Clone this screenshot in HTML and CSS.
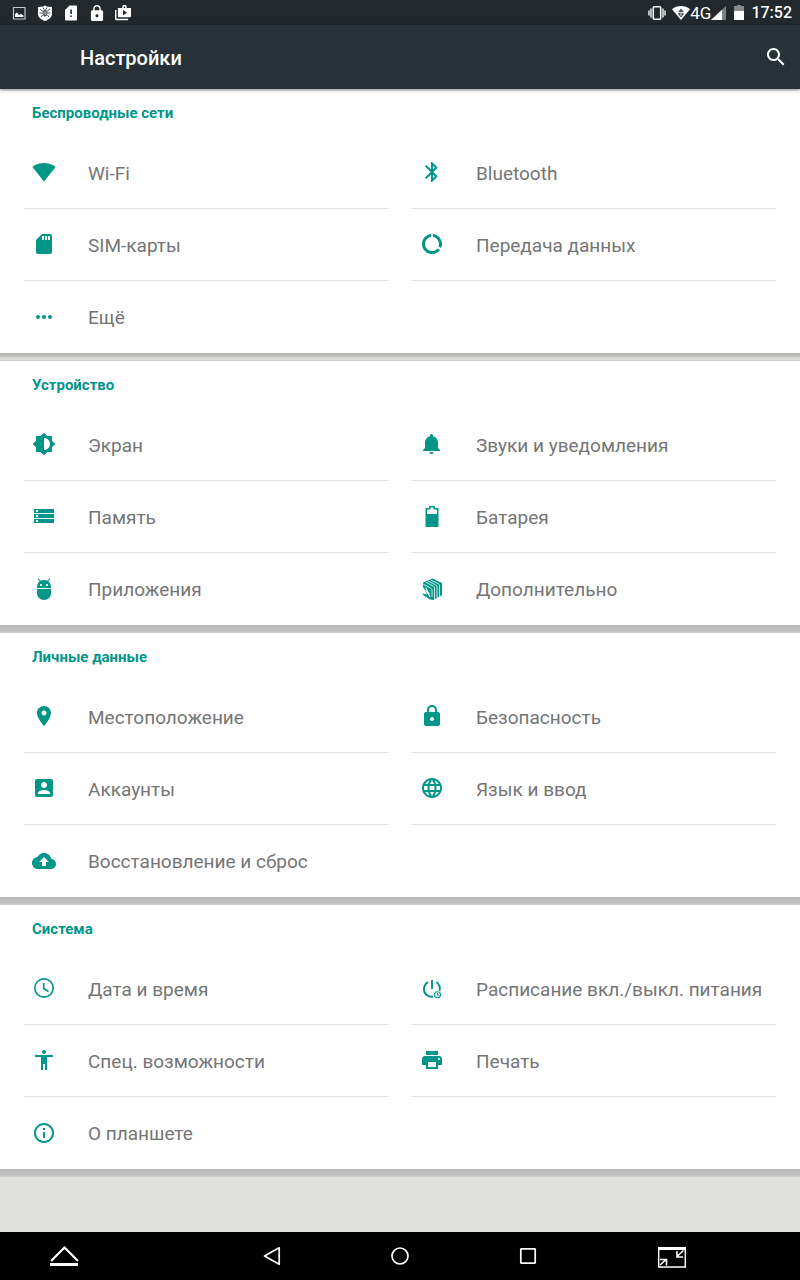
FILE: index.html
```html
<!DOCTYPE html>
<html lang="ru">
<head>
    <meta charset="utf-8">
    <meta name="viewport" content="width=device-width, initial-scale=1">
    <title>Настройки</title>
    <link rel="stylesheet" href="styles.css">
</head>
<body>
    <div class="status-bar">
        <div class="status-left">
            <svg class="status-icon" viewBox="0 0 16 16"><path fill="none" stroke="#c4c8ca" stroke-width="1.200" d="M2.500 2.500h11.500v11.500h-11.500z"/><path fill="#fff" d="M4 12V9l2-1.500 2 2.500 2-1 2.500 1.500V12z"/></svg>
            <svg class="status-icon" viewBox="0 0 16 16"><path d="M8 .3l1.500 1.200L15 2v7c0 3-3 5.500-7 7-4-1.500-7-4-7-7V2l5.500-.5z"/><path fill="none" stroke="#3c4448" stroke-width=".9" d="M3 4l3 2.500M13 4l-3 2.500M2.500 8H6m7.500 0H10M4 12l2-2.500m6 2.500l-2-2.500M6 2.500l1 2m3-2l-1 2"/><ellipse cx="8" cy="8" rx="2.200" ry="3.500" fill="#4a5155"/><path stroke="#fff" stroke-width=".7" d="M6.500 7h3M6.500 9h3"/></svg>
            <svg class="status-icon" viewBox="0 0 16 16"><path fill-rule="evenodd" d="M6.500.5H13a1 1 0 0 1 1 1v13a1 1 0 0 1-1 1H3a1 1 0 0 1-1-1V5zM7.300 4.500V9h1.600V4.500zm0 6v1.600h1.600v-1.600z"/></svg>
            <svg class="status-icon" viewBox="4 1 16 21"><path d="M18 8h-1V6c0-2.760-2.240-5-5-5S7 3.240 7 6v2H6c-1.100 0-2 .9-2 2v10c0 1.100.9 2 2 2h12c1.100 0 2-.9 2-2V10c0-1.100-.9-2-2-2zm-6 9c-1.100 0-2-.9-2-2s.9-2 2-2 2 .9 2 2-.9 2-2 2zm3.100-9H8.900V6c0-1.710 1.390-3.100 3.100-3.100s3.100 1.390 3.100 3.100z"/></svg>
            <svg class="status-icon" viewBox="1 1 22 22"><path d="M3 8H1v12c0 1.100.9 2 2 2h16v-2H3zM17 5V3c0-1.100-.9-2-2-2h-2c-1.100 0-2 .9-2 2v2H5v11c0 1.100.9 2 2 2h14c1.100 0 2-.9 2-2V5zm-4-2h2v2h-2zm-1 12V8l5.500 3.500z"/></svg>
        </div>
        <div class="status-right">
            <svg class="status-vibrate" viewBox="0 0 18 14"><path fill="#b5babc" d="M0 4.500h2v5H0zM2 2.500h2v9H2zM14 2.500h2v9h-2zM16 4.500h2v5h-2z"/><path fill="none" stroke="#fff" stroke-width="1.500" d="M6 .8h6a1 1 0 0 1 .7.7v11a1 1 0 0 1-.7.7H6a1 1 0 0 1-.7-.7v-11A1 1 0 0 1 6 .8z"/></svg>
            <svg class="status-wifi" viewBox="0 0 18 14"><path d="M0 3.200C5 -1 13-1 18 3.200L9 14z"/><path fill="#4a5155" d="M9 2.500l2.500 3v3L9 11.500 6.500 8.500v-3z"/><path fill="none" stroke="#fff" stroke-width=".8" d="M6 6.500h6M9 7v3"/></svg>
            <span class="network">4G</span>
            <svg class="status-signal" viewBox="0 0 15 14"><path fill="#7b8183" d="M15 0v14H0z"/><path d="M11 3.700V14H0z"/></svg>
            <svg class="status-battery" viewBox="0 0 10 15"><path fill="#85898b" d="M3 0h4v1h3v6H0V1h3z"/><path d="M0 6h10v9H0z"/></svg>
            <span class="clock">17:52</span>
        </div>
    </div>

    <header class="toolbar">
        <h1>Настройки</h1>
        <button class="search-button" type="button" aria-label="Поиск">
            <svg viewBox="0 0 24 24"><path d="M15.500 14h-.79l-.28-.27C15.410 12.590 16 11.110 16 9.500 16 5.910 13.090 3 9.500 3S3 5.910 3 9.500 5.910 16 9.500 16c1.610 0 3.090-.59 4.230-1.570l.27.28v.79l5 4.990L20.490 19zm-6 0C7.010 14 5 11.990 5 9.500S7.010 5 9.500 5 14 7.010 14 9.500 11.990 14 9.500 14z"/></svg>
        </button>
    </header>

    <main class="settings">
        <section class="card">
            <h2>Беспроводные сети</h2>
            <div class="grid">
                <a class="item" href="#">
                    <svg viewBox="0 0 24 24"><path d="M12 21.500L23.640 7c-.45-.34-4.930-4-11.640-4C5.280 3 .81 6.660.36 7z"/></svg>
                    <span>Wi-Fi</span>
                </a>
                <a class="item" href="#">
                    <svg viewBox="0 0 24 24"><path d="M17.710 7.710L12 2h-1v7.590L6.410 5 5 6.410 10.590 12 5 17.590 6.410 19 11 14.410V22h1l5.710-5.710-4.300-4.290zM13 5.830l1.880 1.880L13 9.590zm1.880 10.460L13 18.170v-3.760z"/></svg>
                    <span>Bluetooth</span>
                </a>
                <a class="item" href="#">
                    <svg viewBox="0 0 24 24"><path d="M18 2h-8L4.020 8 4 20c0 1.100.9 2 2 2h12c1.100 0 2-.9 2-2V4c0-1.100-.9-2-2-2zm-6 6h-2V4h2zm3 0h-2V4h2zm3 0h-2V4h2z"/></svg>
                    <span>SIM-карты</span>
                </a>
                <a class="item" href="#">
                    <svg viewBox="0 0 24 24"><path d="M13 2.050v3.030c3.390.49 6 3.390 6 6.920 0 .9-.18 1.750-.48 2.540l2.600 1.530c.56-1.240.88-2.620.88-4.070 0-5.180-3.950-9.450-9-9.950zM12 19c-3.870 0-7-3.130-7-7 0-3.530 2.610-6.430 6-6.920V2.050c-5.060.5-9 4.760-9 9.950 0 5.520 4.470 10 9.990 10 3.310 0 6.240-1.610 8.060-4.090l-2.600-1.530C16.170 17.980 14.210 19 12 19z"/></svg>
                    <span>Передача данных</span>
                </a>
                <a class="item item-last" href="#">
                    <svg viewBox="0 0 24 24"><path d="M6 10c-1.100 0-2 .9-2 2s.9 2 2 2 2-.9 2-2-.9-2-2-2zm12 0c-1.100 0-2 .9-2 2s.9 2 2 2 2-.9 2-2-.9-2-2-2zm-6 0c-1.100 0-2 .9-2 2s.9 2 2 2 2-.9 2-2-.9-2-2-2z"/></svg>
                    <span>Ещё</span>
                </a>
            </div>
        </section>
        <div class="divider divider-light"></div>

        <section class="card">
            <h2>Устройство</h2>
            <div class="grid">
                <a class="item" href="#">
                    <svg viewBox="0 0 24 24"><path d="M20 15.310L23.310 12 20 8.690V4h-4.690L12 .69 8.690 4H4v4.690L.69 12 4 15.310V20h4.690L12 23.310 15.310 20H20zM12 18V6c3.310 0 6 2.690 6 6s-2.690 6-6 6z"/></svg>
                    <span>Экран</span>
                </a>
                <a class="item" href="#">
                    <svg viewBox="0 0 24 24"><path d="M11.500 22c1.100 0 2-.9 2-2h-4c0 1.100.9 2 2 2zm6.500-6v-5.500c0-3.070-2.130-5.640-5-6.320V3.500c0-.83-.67-1.500-1.500-1.500S10 2.670 10 3.500v.68c-2.870.68-5 3.250-5 6.320V16l-2 2v1h17v-1z"/></svg>
                    <span>Звуки и уведомления</span>
                </a>
                <a class="item" href="#">
                    <svg viewBox="0 0 24 24"><path d="M2 19h20v-4H2zm2-3h2v2H4zM2 5v4h20V5zm4 3H4V6h2zm-4 6h20v-4H2zm2-3h2v2H4z"/></svg>
                    <span>Память</span>
                </a>
                <a class="item" href="#">
                    <svg viewBox="0 0 24 24"><path fill-rule="evenodd" d="M9 2h6v2h3.500v19h-13V4H9zm1.500 1.500v2H7V10h10V5.500h-3.500v-2z"/></svg>
                    <span>Батарея</span>
                </a>
                <a class="item item-last" href="#">
                    <svg viewBox="0 0 24 24"><path fill-rule="evenodd" d="M5 16c0 3.900 3.100 7 7 7s7-3.100 7-7v-4H5zM16.120 4.370l2.100-2.100-.82-.83-2.300 2.310C14.160 3.280 13.120 3 12 3s-2.160.28-3.090.75L6.600 1.440l-.82.83 2.100 2.100C6.140 5.640 5 7.680 5 10v1h14v-1c0-2.320-1.140-4.360-2.880-5.630zM9 9c-.55 0-1-.45-1-1s.45-1 1-1 1 .45 1 1-.45 1-1 1zm6 0c-.55 0-1-.45-1-1s.45-1 1-1 1 .45 1 1-.45 1-1 1z"/></svg>
                    <span>Приложения</span>
                </a>
                <a class="item item-last" href="#">
                    <svg viewBox="0 0 24 24"><path d="M3 5.500L12.500 1.500 22 6v12L13.500 23 10 22.500 3 18v-1.500l4 1L3 10z"/><path fill="none" stroke="#fff" stroke-width=".8" d="M5.500 5l7.500 4c1 .5 1.500 1 1.500 2v12M8 4l7.500 3.800c1 .5 1.500 1 1.500 2V21.500M10.500 3l7.500 3.500c1 .5 1.500 1 1.500 2V20M3 7l7.500 4c1 .5 1.500 1.500 1.500 2.500V20"/><path fill="none" stroke="#fff" stroke-width="1.100" d="M3 12.500l4 2.500 3 5M5.500 10.500l4 7"/></svg>
                    <span>Дополнительно</span>
                </a>
            </div>
        </section>
        <div class="divider"></div>

        <section class="card">
            <h2>Личные данные</h2>
            <div class="grid">
                <a class="item" href="#">
                    <svg viewBox="0 0 24 24"><path d="M12 2C8.130 2 5 5.130 5 9c0 5.250 7 13 7 13s7-7.750 7-13c0-3.870-3.130-7-7-7zm0 9.500c-1.380 0-2.500-1.120-2.500-2.500s1.120-2.500 2.500-2.500 2.500 1.120 2.500 2.500-1.120 2.500-2.500 2.500z"/></svg>
                    <span>Местоположение</span>
                </a>
                <a class="item" href="#">
                    <svg viewBox="0 0 24 24"><path d="M18 8h-1V6c0-2.760-2.240-5-5-5S7 3.240 7 6v2H6c-1.100 0-2 .9-2 2v10c0 1.100.9 2 2 2h12c1.100 0 2-.9 2-2V10c0-1.100-.9-2-2-2zm-6 9c-1.100 0-2-.9-2-2s.9-2 2-2 2 .9 2 2-.9 2-2 2zm3.100-9H8.900V6c0-1.710 1.390-3.100 3.100-3.100s3.100 1.390 3.100 3.100z"/></svg>
                    <span>Безопасность</span>
                </a>
                <a class="item" href="#">
                    <svg viewBox="0 0 24 24"><path d="M3 5v14c0 1.100.89 2 2 2h14c1.100 0 2-.9 2-2V5c0-1.100-.9-2-2-2H5c-1.110 0-2 .9-2 2zm12 4c0 1.660-1.340 3-3 3s-3-1.340-3-3 1.340-3 3-3 3 1.340 3 3zm-9 8c0-2 4-3.100 6-3.100s6 1.100 6 3.100v1H6z"/></svg>
                    <span>Аккаунты</span>
                </a>
                <a class="item" href="#">
                    <svg viewBox="0 0 24 24"><path d="M11.990 2C6.470 2 2 6.480 2 12s4.470 10 9.990 10C17.520 22 22 17.520 22 12S17.520 2 11.990 2zm6.930 6h-2.950c-.32-1.250-.78-2.450-1.380-3.560 1.840.63 3.370 1.910 4.330 3.560zM12 4.040c.83 1.200 1.480 2.530 1.910 3.960h-3.820c.43-1.430 1.080-2.760 1.910-3.960zM4.260 14C4.100 13.360 4 12.690 4 12s.1-1.360.26-2h3.380c-.08.66-.14 1.320-.14 2s.06 1.340.14 2zm.82 2h2.950c.32 1.250.78 2.450 1.380 3.560-1.840-.63-3.370-1.900-4.330-3.560zm2.950-8H5.080c.96-1.660 2.490-2.930 4.330-3.560C8.810 5.550 8.350 6.750 8.030 8zM12 19.960c-.83-1.200-1.480-2.530-1.910-3.960h3.820c-.43 1.430-1.080 2.760-1.910 3.960zM14.340 14H9.660c-.09-.66-.16-1.320-.16-2s.07-1.350.16-2h4.680c.09.65.16 1.320.16 2s-.07 1.340-.16 2zm.25 5.560c.6-1.110 1.060-2.310 1.380-3.560h2.950c-.96 1.650-2.490 2.930-4.330 3.560zM16.360 14c.08-.66.14-1.320.14-2s-.06-1.340-.14-2h3.380c.16.64.26 1.310.26 2s-.1 1.360-.26 2z"/></svg>
                    <span>Язык и ввод</span>
                </a>
                <a class="item item-last" href="#">
                    <svg viewBox="0 0 24 24"><path fill-rule="evenodd" d="M19.350 10.040C18.670 6.590 15.640 4 12 4 9.110 4 6.600 5.640 5.350 8.040 2.340 8.360 0 10.910 0 14c0 3.310 2.690 6 6 6h13c2.760 0 5-2.240 5-5 0-2.640-2.050-4.780-4.650-4.960zM14 13v4h-4v-4H7l5-5 5 5z"/></svg>
                    <span>Восстановление и сброс</span>
                </a>
            </div>
        </section>
        <div class="divider"></div>

        <section class="card">
            <h2>Система</h2>
            <div class="grid">
                <a class="item" href="#">
                    <svg viewBox="0 0 24 24"><g fill="none" stroke="#009688" stroke-width="1.700"><circle cx="12" cy="12" r="9.200"/><path d="M11.700 7v5.500l4.800 3"/></g></svg>
                    <span>Дата и время</span>
                </a>
                <a class="item" href="#">
                    <svg viewBox="0 -1 24 24"><g fill="none" stroke="#009688" stroke-width="1.900"><path d="M12 3V12M8 5C3 8 3 14.500 6 17.500c1.800 1.800 4.500 2.500 7 2M16.500 5C19.500 7.500 20.300 11 19.500 14"/></g><g fill="none" stroke="#009688" stroke-width="1.100"><circle cx="17.500" cy="17.800" r="3"/><path d="M17.500 16v2h1.500"/></g></svg>
                    <span>Расписание вкл./выкл. питания</span>
                </a>
                <a class="item" href="#">
                    <svg viewBox="0 0 24 24"><path d="M12 2c1.100 0 2 .9 2 2s-.9 2-2 2-2-.9-2-2 .9-2 2-2zm9 7h-6v13h-2v-6h-2v6H9V9H3V7h18z"/></svg>
                    <span>Спец. возможности</span>
                </a>
                <a class="item" href="#">
                    <svg viewBox="0 0 24 24"><path d="M19 8H5c-1.660 0-3 1.340-3 3v6h4v4h12v-4h4v-6c0-1.660-1.340-3-3-3zm-3 11H8v-5h8zm3-7c-.55 0-1-.45-1-1s.45-1 1-1 1 .45 1 1-.45 1-1 1zm-1-9H6v4h12z"/></svg>
                    <span>Печать</span>
                </a>
                <a class="item item-last" href="#">
                    <svg viewBox="0 0 24 24"><path d="M11 17h2v-6h-2zm1-15C6.480 2 2 6.480 2 12s4.480 10 10 10 10-4.480 10-10S17.520 2 12 2zm0 18c-4.410 0-8-3.590-8-8s3.590-8 8-8 8 3.590 8 8-3.590 8-8 8zM11 9h2V7h-2z"/></svg>
                    <span>О планшете</span>
                </a>
            </div>
        </section>
        <div class="divider"></div>
    </main>

    <nav class="nav-bar">
        <button class="nav-button" type="button" aria-label="Показать панель">
            <svg viewBox="0 0 32 32"><path d="M3 21L16.500 7.500 30 21" stroke-width="2.200"/><path d="M2 24.500h28" stroke-width="3"/></svg>
        </button>
        <button class="nav-button nav-back" type="button" aria-label="Назад">
            <svg viewBox="0 0 32 32"><path d="M8.500 16L23.200 7.800v16.400z" stroke-width="1.700" stroke-linejoin="round"/></svg>
        </button>
        <button class="nav-button" type="button" aria-label="Домой">
            <svg viewBox="0 0 32 32"><circle cx="16" cy="16" r="8" stroke-width="1.700"/></svg>
        </button>
        <button class="nav-button" type="button" aria-label="Последние">
            <svg viewBox="0 0 32 32"><rect x="8.800" y="8.800" width="14.400" height="14.400" rx=".6" stroke-width="1.700"/></svg>
        </button>
        <button class="nav-button" type="button" aria-label="Свернуть">
            <svg viewBox="0 0 32 32"><path d="M2.700 8.500h26.600v18.500H2.700z" stroke-width="1.400"/><path d="M2 8.500h28" stroke-width="3"/><path d="M4 25l6-5.500M4 19.500h6.500v6M27.500 10.500l-6.500 6M21 11v6h6" stroke-width="1.600"/></svg>
        </button>
    </nav>
</body>
</html>
```

FILE: styles.css
```css
* {
    margin: 0;
    padding: 0;
    box-sizing: border-box;
}

body {
    display: flex;
    flex-direction: column;
    min-height: 100vh;
    background-color: #e0e0de;
    color: #757575;
    font-family: Roboto, 'Noto Sans', sans-serif;
}

svg {
    display: block;
    flex-shrink: 0;
    fill: currentColor;
}

button {
    background: none;
    border: none;
    color: #fff;
    cursor: pointer;
}

/* Status bar */
.status-bar {
    display: flex;
    justify-content: space-between;
    align-items: center;
    height: 25px;
    padding: 0 8px 0 11px;
    background-color: #22282b;
    color: #fff;
}

.status-left, .status-right {
    display: flex;
    align-items: center;
}

.status-left {
    gap: 10px;
}

.status-icon {
    width: 16px;
    height: 16px;
}

.status-vibrate {
    width: 18px;
    height: 14px;
    margin-right: 6px;
}

.status-wifi {
    width: 18px;
    height: 14px;
}

.network {
    font-size: 17px;
    line-height: 24px;
}

.status-signal {
    width: 15px;
    height: 14px;
    margin-right: 8px;
}

.status-battery {
    width: 10px;
    height: 15px;
    margin-right: 7px;
}

.clock {
    font-size: 16px;
    font-weight: 500;
    line-height: 24px;
}

/* Toolbar */
.toolbar {
    position: relative;
    display: flex;
    justify-content: space-between;
    align-items: center;
    height: 64px;
    padding: 0 12px 0 80px;
    background-color: #263238;
    color: #fff;
    box-shadow: 0 1px 3px rgba(0, 0, 0, 0.5);
}

h1 {
    padding-top: 2px;
    font-size: 20px;
    font-weight: 500;
    line-height: 28px;
}

.search-button svg {
    width: 24px;
    height: 24px;
}

/* Settings cards */
.settings {
    flex: 1;
}

.card {
    padding: 0 24px;
    background-color: #fff;
}

.divider {
    height: 8px;
    background: linear-gradient(#b4b4b4 1px, #bfbfbf 1px, #bfbfbf 6px, #cfcfcd 7px);
}

.divider-light {
    background: linear-gradient(#aeaeac, #c6c6c4 4px, #dededc 5px, #dededc 7px, #cfcfcd 7px);
}

h2 {
    height: 48px;
    padding-left: 8px;
    color: #009688;
    font-size: 15px;
    font-weight: 700;
    line-height: 48px;
}

.grid {
    display: grid;
    grid-template-columns: 1fr 1fr;
    column-gap: 24px;
}

.item {
    display: flex;
    align-items: center;
    gap: 32px;
    height: 72px;
    padding-left: 8px;
    box-shadow: inset 0 -1px #e0e0e0;
    color: #757575;
    font-size: 19px;
    line-height: 24px;
    text-decoration: none;
}

.item span {
    padding-top: 2px;
}

.item svg {
    width: 24px;
    height: 24px;
    margin-bottom: 2px;
    color: #009688;
}

.item-last {
    box-shadow: none;
}

.item-last svg {
    margin-bottom: 0;
}

/* Navigation bar */
.nav-bar {
    display: grid;
    grid-template-columns: 8fr 5fr 8fr 8fr 8fr 10fr 3fr;
    height: 48px;
    background-color: #000;
}

.nav-button {
    display: flex;
    justify-content: center;
    align-items: center;
}

.nav-back {
    grid-column: 3;
}

.nav-button svg {
    width: 32px;
    height: 32px;
    fill: none;
    stroke: #fff;
}
```
